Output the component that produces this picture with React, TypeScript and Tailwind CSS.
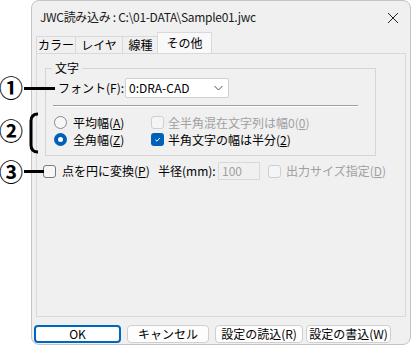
import React from "react";

const jp = "font-['Noto_Sans_CJK_JP',sans-serif]";

const tabs = [
  { name: "カラー", w: "w-[39px]" },
  { name: "レイヤ", w: "w-[47px]" },
  { name: "線種", w: "w-[36px]" },
];

function Radio({ checked }: { checked?: boolean }) {
  if (checked) {
    return (
      <span className="flex h-[13px] w-[13px] shrink-0 items-center justify-center rounded-full bg-[#005fb8]">
        <span className="h-[5px] w-[5px] rounded-full bg-white" />
      </span>
    );
  }
  return <span className="h-[13px] w-[13px] shrink-0 rounded-full border border-[#8a8a8a] bg-[#f7f7f7]" />;
}

function Check({ checked, disabled }: { checked?: boolean; disabled?: boolean }) {
  if (checked) {
    return (
      <span className="flex h-[13px] w-[13px] shrink-0 items-center justify-center rounded-[3px] bg-[#005fb8]">
        <svg width="9" height="9" viewBox="0 0 9 9">
          <path d="M2.5 4.8 L4 6.2 L6.8 3" fill="none" stroke="white" strokeWidth="1" />
        </svg>
      </span>
    );
  }
  return (
    <span
      className={`block h-[13px] w-[13px] shrink-0 rounded-[3px] border ${
        disabled ? "border-[#cfcfcf] bg-[#f5f5f5]" : "border-[#7a7a7a] bg-[#f7f7f7]"
      }`}
    />
  );
}

export default function App() {
  return (
    <div className={`relative h-[346px] w-[412px] bg-white text-[12px] leading-[16px] text-black ${jp}`}>
      {/* dialog */}
      <div className="ml-[31px] flex h-[345px] w-[380px] flex-col rounded-[8px] border border-[#c4c4c4] bg-[#f0f0f0]">
        <div className="flex h-[31px] shrink-0 items-center justify-between pl-[8px] pr-[8px]">
          <span className="text-[12px] tracking-[-0.3px] text-[#1a1a1a]">{"JWC読み込み : C:\\01-DATA\\Sample01.jwc"}</span>
          <svg width="12" height="12" viewBox="0 0 12 12" className="mr-[3px] mt-[2px]">
            <path d="M1 1 L11 11 M11 1 L1 11" stroke="#222" strokeWidth="1" />
          </svg>
        </div>

        {/* tabs */}
        <div className="flex h-[21px] shrink-0 items-end pl-[4px]">
          {tabs.map((t) => (
            <div
              key={t.name}
              className={`flex h-[17px] ${t.w} items-center justify-center border border-b-0 border-r-0 border-[#d9d9d9] text-[12px]`}
            >
              {t.name}
            </div>
          ))}
          <div className="-mb-px -ml-[1px] flex h-[22px] w-[55px] items-center justify-center border border-b-0 border-[#d9d9d9] bg-[#f9f9f9] pb-[2px] text-[12px]">
            その他
          </div>
        </div>

        {/* panel */}
        <div className="mx-[4px] h-[264px] shrink-0 border border-[#d9d9d9] bg-[#f0f0f0]">
          <fieldset className="ml-[8px] mt-[6px] w-[331px] border border-[#d5d5d5]">
            <legend className="ml-[6px] px-[3px] leading-[16px]">文字</legend>
            <div className="mt-[2px] flex h-[20px] items-center pl-[12px]">
              <span className="w-[67px]">フォント(F):</span>
              <div className="flex h-[20px] w-[104px] items-center justify-between rounded-[2px] border border-[#d0d0d0] bg-white pl-[3px] pr-[5px]">
                <span>0:DRA-CAD</span>
                <svg width="9" height="6" viewBox="0 0 9 6">
                  <path d="M0.5 1 L4.5 5 L8.5 1" fill="none" stroke="#555" strokeWidth="1" />
                </svg>
              </div>
            </div>
            <div className="ml-[7px] mt-[7px] h-[2px] w-[305px] border-b border-white bg-[#a0a0a0]" />
            <div className="mt-[7px] pb-[7px] pl-[8px]">
              <div className="flex h-[17px] items-center">
                <div className="flex w-[97px] items-center gap-[6px]">
                  <Radio />
                  <span>平均幅(<u>A</u>)</span>
                </div>
                <div className="flex items-center gap-[4px] text-[#a0a0a0]">
                  <Check disabled />
                  <span>全半角混在文字列は幅0(<u>0</u>)</span>
                </div>
              </div>
              <div className="flex h-[17px] items-center">
                <div className="flex w-[97px] items-center gap-[6px]">
                  <Radio checked />
                  <span>全角幅(<u>Z</u>)</span>
                </div>
                <div className="flex items-center gap-[4px]">
                  <Check checked />
                  <span>半角文字の幅は半分(<u>2</u>)</span>
                </div>
              </div>
            </div>
          </fieldset>

          <div className="ml-[6px] mt-[6px] flex h-[18px] items-center">
            <Check />
            <span className="ml-[6px] w-[96px]">点を円に変換(<u>P</u>)</span>
            <span className="w-[60px]">半径(mm):</span>
            <div className="flex h-[18px] w-[42px] items-center border border-[#d9d9d9] bg-[#f0f0f0] pl-[3px] text-[#a0a0a0]">
              100
            </div>
            <div className="ml-[8px] flex items-center">
              <Check disabled />
            </div>
            <span className="ml-[5px] text-[#a0a0a0]">出力サイズ指定(<u>D</u>)</span>
          </div>
        </div>

        {/* buttons */}
        <div className="mt-[8px] flex h-[18px] shrink-0 pl-[2px]">
          <button className="flex h-[18px] w-[87px] items-center justify-center rounded-[4px] border-2 border-[#0067c0] bg-white">
            OK
          </button>
          <button className="ml-[6px] flex h-[18px] w-[82px] items-center justify-center rounded-[4px] border border-[#cfcfcf] bg-[#fdfdfd]">
            キャンセル
          </button>
          <button className="ml-[6px] flex h-[18px] w-[88px] items-center justify-center rounded-[4px] border border-[#cfcfcf] bg-[#fdfdfd]">
            設定の読込(R)
          </button>
          <button className="ml-[3px] flex h-[18px] w-[85px] items-center justify-center rounded-[4px] border border-[#cfcfcf] bg-[#fdfdfd]">
            設定の書込(W)
          </button>
        </div>
      </div>

      {/* annotations */}
      <span className="absolute left-[-1px] top-[74px] text-[24px] font-bold leading-[26px]">①</span>
      <div className="absolute left-[24px] top-[87px] h-[3px] w-[31px] bg-black" />
      <span className="absolute left-[-1px] top-[117px] text-[24px] font-bold leading-[26px]">②</span>
      <svg className="absolute left-[26px] top-[112px]" width="14" height="42" viewBox="0 0 14 42">
        <path d="M12 2 Q5 2 5 9 L5 33 Q5 40 12 40" fill="none" stroke="black" strokeWidth="3" />
      </svg>
      <span className="absolute left-[-1px] top-[158px] text-[24px] font-bold leading-[26px]">③</span>
      <div className="absolute left-[24px] top-[170px] h-[3px] w-[20px] bg-black" />
    </div>
  );
}
